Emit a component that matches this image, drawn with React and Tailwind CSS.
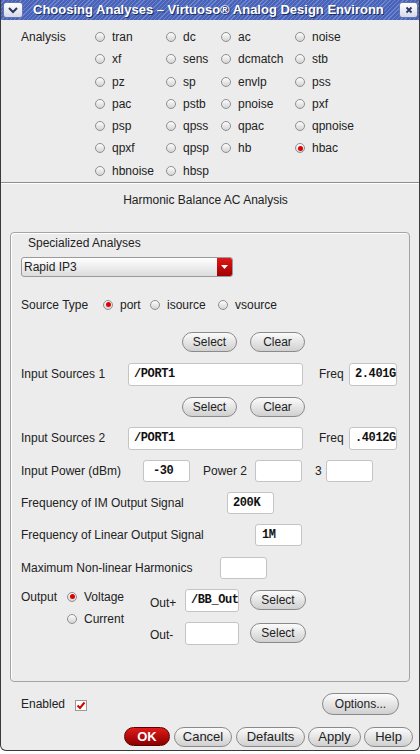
import React from "react";

const rows = [
  ["tran", "dc", "ac", "noise"],
  ["xf", "sens", "dcmatch", "stb"],
  ["pz", "sp", "envlp", "pss"],
  ["pac", "pstb", "pnoise", "pxf"],
  ["psp", "qpss", "qpac", "qpnoise"],
  ["qpxf", "qpsp", "hb", "hbac"],
  ["hbnoise", "hbsp", null, null],
];

function Radio({ label, checked }) {
  return (
    <span className="flex items-center gap-[7px]">
      <span className="w-[10px] h-[10px] rounded-full border border-[#8f8f8f] bg-linear-to-b from-[#fdfdfd] to-[#d4d4d4] flex items-center justify-center shrink-0">
        {checked && <span className="w-[5px] h-[5px] rounded-full bg-[#e00000]" />}
      </span>
      <span>{label}</span>
    </span>
  );
}

function Btn({ children, className = "" }) {
  return (
    <div
      className={`h-[20px] rounded-full border border-[#8a8a8a] bg-linear-to-b from-[#fbfbfb] to-[#d0d0d0] flex items-center justify-center text-[12px] text-[#222] shrink-0 ${className}`}
    >
      {children}
    </div>
  );
}

function Field({ value, className = "" }) {
  return (
    <div
      className={`h-full bg-white border border-[#c4c4c4] rounded-[3px] flex items-center pl-[5px] font-['Liberation_Mono',monospace] font-bold text-[12px] tracking-[-0.4px] text-[#111] overflow-hidden whitespace-nowrap shrink-0 ${className}`}
    >
      {value}
    </div>
  );
}

export default function App() {
  return (
    <div className="w-[420px] h-[754px] bg-white font-['Liberation_Sans',Arial,sans-serif] text-[12px] text-[#222]">
      <div className="h-[751px] flex flex-col border-x border-b border-[#3a3a3a] rounded-b-[6px] bg-[#ececec] overflow-hidden">
        {/* title bar */}
        <div className="h-[20px] flex items-center bg-[repeating-linear-gradient(135deg,#4a63b6_0px,#4a63b6_2px,#6b84cf_2px,#6b84cf_3px)] shrink-0">
          <div className="ml-[2px] w-[20px] h-[16px] rounded-[3px] border border-[#6476b0] bg-linear-to-b from-white to-[#d6dae8] flex items-center justify-center">
            <svg width="12" height="8" viewBox="0 0 12 8">
              <path d="M2 2 L6 6 L10 2" fill="none" stroke="#2a3560" strokeWidth="2" />
            </svg>
          </div>
          <div className="ml-[10px] whitespace-nowrap text-white font-bold text-[13px] [text-shadow:1px_1px_0_#1d2b5c]">
            Choosing Analyses – Virtuoso® Analog Design Environn
          </div>
          <div className="ml-auto mr-[1px] w-[19px] h-[16px] rounded-[3px] border border-[#6476b0] bg-linear-to-b from-white to-[#d6dae8] flex items-center justify-center">
            <svg width="8" height="8" viewBox="0 0 8 8">
              <path d="M1.5 1.5 L6.5 6.5 M6.5 1.5 L1.5 6.5" stroke="#2a3560" strokeWidth="1.8" />
            </svg>
          </div>
        </div>

        {/* analysis choice */}
        <div className="pt-[6px] flex">
          <div className="w-[94px] pl-[20px] h-[22.25px] flex items-center">Analysis</div>
          <div className="grid grid-cols-[71px_55px_74px_80px] auto-rows-[22.25px]">
            {rows.map((r, i) =>
              r.map((name, j) => (
                <div key={`${i}-${j}`} className="flex items-center">
                  {name && <Radio label={name} checked={name === "hbac"} />}
                </div>
              ))
            )}
          </div>
        </div>
        <div className="h-[1px] bg-[#8e8e8e]" />
        <div className="h-[1px] bg-white" />

        <div className="h-[32px] flex items-center justify-center pr-[9px]">Harmonic Balance AC Analysis</div>

        {/* group box */}
        <div className="mt-[16px] ml-[9px] mr-[9px] border border-[#a4a4a4] rounded-[4px] shadow-[inset_1px_1px_0_#fff] pl-[10px] pb-[36px]">
          <div className="h-[20px] flex items-center pl-[7px]">Specialized Analyses</div>

          <div className="mt-[4px] w-[212px] h-[20px] flex rounded-[3px] border border-[#9a9a9a] overflow-hidden bg-linear-to-b from-white to-[#dcdcdc]">
            <div className="flex-1 flex items-center pl-[2px]">Rapid IP3</div>
            <div className="w-[15px] bg-linear-to-b from-[#e01818] to-[#a00000] flex items-center justify-center">
              <svg width="7" height="4" viewBox="0 0 7 4">
                <path d="M0 0 L7 0 L3.5 4 Z" fill="#fff" />
              </svg>
            </div>
          </div>

          <div className="mt-[18px] h-[20px] flex items-center">
            <div className="w-[82px]">Source Type</div>
            <div className="w-[47px]">
              <Radio label="port" checked />
            </div>
            <div className="w-[68px]">
              <Radio label="isource" />
            </div>
            <Radio label="vsource" />
          </div>

          <div className="mt-[17px] flex">
            <Btn className="ml-[161px] w-[55px]">Select</Btn>
            <Btn className="ml-[13px] w-[55px]">Clear</Btn>
          </div>

          <div className="mt-[11px] h-[23px] flex items-center">
            <div className="w-[107px]">Input Sources 1</div>
            <Field value="/PORT1" className="w-[175px]" />
            <div className="ml-[16px] w-[30px]">Freq</div>
            <Field value="2.401G" className="w-[48px] pl-[2px]" />
          </div>

          <div className="mt-[11px] flex">
            <Btn className="ml-[161px] w-[55px]">Select</Btn>
            <Btn className="ml-[13px] w-[55px]">Clear</Btn>
          </div>

          <div className="mt-[10px] h-[23px] flex items-center">
            <div className="w-[107px]">Input Sources 2</div>
            <Field value="/PORT1" className="w-[175px]" />
            <div className="ml-[16px] w-[30px]">Freq</div>
            <Field value=".4012G" className="w-[48px] pl-[2px]" />
          </div>

          <div className="mt-[10px] h-[22px] flex items-center">
            <div className="w-[122px]">Input Power (dBm)</div>
            <Field value="-30" className="w-[47px] pl-[9px]" />
            <div className="ml-[13px] w-[52px]">Power 2</div>
            <Field value="" className="w-[47px]" />
            <div className="ml-[13px] w-[11px]">3</div>
            <Field value="" className="w-[47px]" />
          </div>

          <div className="mt-[10px] h-[22px] flex items-center">
            <div className="w-[206px]">Frequency of IM Output Signal</div>
            <Field value="200K" className="w-[47px] pl-[3px]" />
          </div>

          <div className="mt-[10px] h-[22px] flex items-center">
            <div className="w-[234px]">Frequency of Linear Output Signal</div>
            <Field value="1M" className="w-[47px] pl-[6px]" />
          </div>

          <div className="mt-[11px] h-[22px] flex items-center">
            <div className="w-[199px]">Maximum Non-linear Harmonics</div>
            <Field value="" className="w-[47px]" />
          </div>

          <div className="mt-[10px] flex items-start">
            <div className="w-[129px]">
              <div className="h-[16px] flex items-center">
                <div className="w-[46px]">Output</div>
                <Radio label="Voltage" checked />
              </div>
              <div className="mt-[6px] h-[16px] flex items-center pl-[46px]">
                <Radio label="Current" />
              </div>
            </div>
            <div>
              <div className="h-[23px] flex items-center">
                <div className="w-[35px] pt-[5px]">Out+</div>
                <Field value="/BB_Out" className="w-[54px] pl-[2px]" />
                <Btn className="ml-[11px] w-[56px]">Select</Btn>
              </div>
              <div className="mt-[10px] h-[23px] flex items-center">
                <div className="w-[35px] pt-[4px]">Out-</div>
                <Field value="" className="w-[54px]" />
                <Btn className="ml-[11px] w-[56px]">Select</Btn>
              </div>
            </div>
          </div>
        </div>

        {/* enabled / options */}
        <div className="mt-[11px] h-[22px] flex items-center pl-[20px] pr-[20px]">
          <div>Enabled</div>
          <div className="ml-[10px] mt-[3px] w-[12px] h-[11px] bg-white border border-[#9a9a9a] flex items-center justify-center">
            <svg width="10" height="9" viewBox="0 0 10 9">
              <path d="M1.5 4.5 L4 7 L8.5 1.5" fill="none" stroke="#d80000" strokeWidth="2" />
            </svg>
          </div>
          <Btn className="ml-auto w-[77px] h-[22px]">Options...</Btn>
        </div>

        {/* bottom buttons */}
        <div className="mt-[12px] h-[19px] flex justify-end pr-[6px]">
          <div className="w-[46px] h-[19px] rounded-full border border-[#5a0000] bg-linear-to-b from-[#e01a1a] to-[#8c0000] text-white font-bold text-[13px] flex items-center justify-center">
            OK
          </div>
          <Btn className="ml-[4px] w-[58px] h-[19px] text-[13px]">Cancel</Btn>
          <Btn className="ml-[4px] w-[69px] h-[19px] text-[13px]">Defaults</Btn>
          <Btn className="ml-[3px] w-[53px] h-[19px] text-[13px]">Apply</Btn>
          <Btn className="ml-[3px] w-[49px] h-[19px] text-[13px]">Help</Btn>
        </div>
      </div>
    </div>
  );
}
